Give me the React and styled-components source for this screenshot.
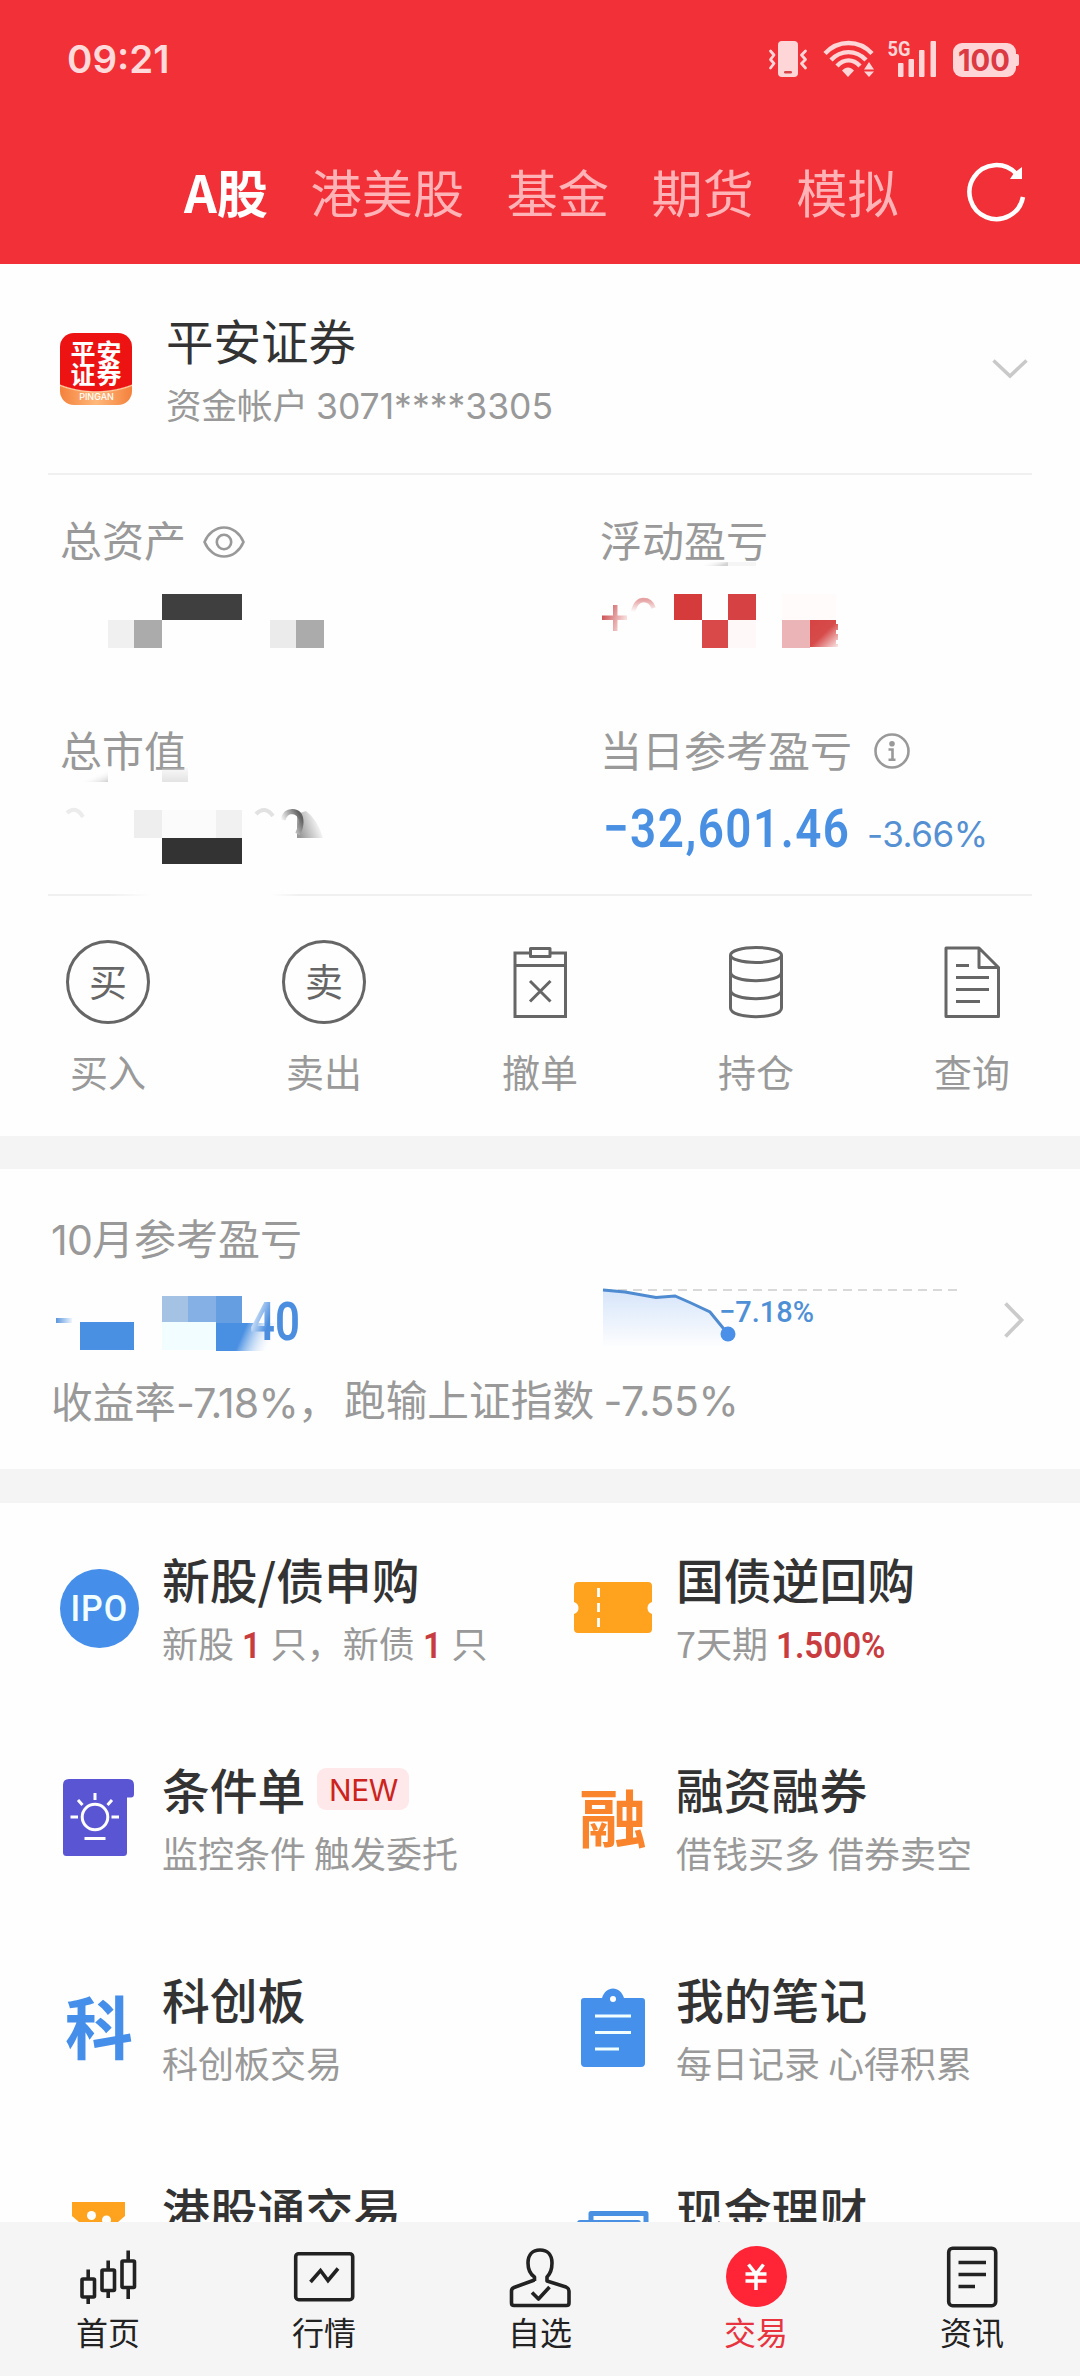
import React from 'react';
import styled, { createGlobalStyle } from 'styled-components';

const CJK = '"Noto Sans CJK SC", "Noto Sans", sans-serif';
const NUM = 'Inter, "Noto Sans CJK SC", sans-serif';
const DIN = 'Roboto, "Noto Sans CJK SC", sans-serif';

const Global = createGlobalStyle`
  *, *::before, *::after { box-sizing: border-box; }
  body { margin: 0; background: #fff; }
`;

const Page = styled.div`
  width: 1080px;
  height: 2376px;
  display: flex;
  flex-direction: column;
  overflow: hidden;
  background: #fefefe;
  color: #333;
  font-family: ${CJK};
  white-space: nowrap;
  svg { display: block; flex: none; overflow: visible; }
`;

const Num = styled.span`
  font-family: ${NUM};
  font-size: ${(p) => p.$size || 'inherit'};
  letter-spacing: ${(p) => p.$ls || 0}px;
`;

const Din = styled.span`
  display: inline-block;
  font-family: ${DIN};
  font-size: ${(p) => p.$size}px;
  font-weight: ${(p) => p.$weight || 600};
  letter-spacing: ${(p) => p.$ls || 0}px;
  transform: scaleX(${(p) => p.$sx || 0.9});
  transform-origin: ${(p) => p.$origin || 'left'} center;
`;

/* ---------- header ---------- */
const Header = styled.header`
  flex: none;
  height: 264px;
  background: #f13037;
  display: flex;
  flex-direction: column;
`;
const StatusBar = styled.div`
  height: 118px;
  padding: 0 60px 0 67px;
  display: flex;
  align-items: center;
  justify-content: space-between;
`;
const Clock = styled.div`
  color: #ffdadb;
  font: 600 38.5px/50px Inter, sans-serif;
  letter-spacing: 0;
`;
const Tabs = styled.nav`
  height: 146px;
  padding: 0 54px 0 184px;
  display: flex;
  align-items: center;
  gap: 42.5px;
`;
const Tab = styled.div`
  font-size: 51.2px;
  line-height: 60px;
  font-weight: ${(p) => (p.$active ? 700 : 400)};
  color: ${(p) => (p.$active ? '#fff' : '#ffb3b6')};
`;
const Refresh = styled.div`
  margin-left: auto;
`;

/* ---------- account ---------- */
const Section = styled.section`
  flex: none;
  background: #fefefe;
`;
const Band = styled.div`
  flex: none;
  height: ${(p) => p.$h}px;
  background: #f4f4f4;
`;
const Account = styled.div`
  height: 209px;
  padding: 0 52px 0 60px;
  display: flex;
  align-items: center;
`;
const Logo = styled.div`
  width: 72px;
  height: 72px;
  border-radius: 14px;
  overflow: hidden;
  background:
    radial-gradient(ellipse 80px 60px at 50% 0, #ed1313 0 96%, #fbd2a6 98%, transparent 100%),
    linear-gradient(90deg, #f4813c, #ffb87a 50%, #f4813c);
  color: #fff;
  font-size: 25px;
  font-weight: 700;
  line-height: 22px;
  text-align: center;
  padding: 7px 0 0 1px;
  letter-spacing: 1px;
`;
const LogoMark = styled.div`
  height: 44px;
`;
const LogoCaption = styled.div`
  padding-top: 7px;
  font: 500 9px/12px Inter, sans-serif;
  letter-spacing: 0;
`;
const AccountText = styled.div`
  margin-left: 34px;
  padding-top: 4px;
  flex: 1;
`;
const Name = styled.div`
  font-size: 47.5px;
  line-height: 60px;
`;
const AccountNo = styled.div`
  font-size: 35.5px;
  line-height: 50px;
  margin-top: 9px;
  color: #999;
`;
const Divider = styled.div`
  height: 2px;
  margin: 0 48px;
  background: ${(p) =>
    p.$gap
      ? 'linear-gradient(90deg, #f0f0f0 60px, #fefefe 104px, #fefefe 224px, #f0f0f0 250px)'
      : '#f0f0f0'};
`;
const Stats = styled.div`
  height: 419px;
  padding: 39px 0 0 60px;
  display: grid;
  grid-template-columns: 540px 1fr;
  grid-template-rows: 210px 170px;
`;
const Label = styled.div`
  display: flex;
  align-items: center;
  font-size: 42px;
  line-height: 50px;
  height: 50px;
  color: #999;
  gap: ${(p) => p.$gap || 0}px;
`;
const LabelIcon = styled.span`
  padding-top: ${(p) => p.$pt || 0}px;
`;
const Value = styled.div`
  display: flex;
  align-items: baseline;
  height: 84px;
  padding: 24px 0 0 3px;
  line-height: 60px;
  color: #4a90e2;
`;
const Amount = styled.div`
  width: 264px;
`;
const Percent = styled.div`
  font-family: ${NUM};
  font-size: 35px;
  letter-spacing: -0.5px;
  color: #5590d2;
`;

/* ---------- actions ---------- */
const Actions = styled.div`
  height: 240px;
  padding-top: 45px;
  display: grid;
  grid-template-columns: repeat(5, 1fr);
`;
const Action = styled.div`
  display: flex;
  flex-direction: column;
  align-items: center;
`;
const ActionIcon = styled.div`
  height: 82px;
  display: flex;
  align-items: center;
`;
const Ring = styled.div`
  width: 84px;
  height: 84px;
  border: 3px solid #666;
  border-radius: 50%;
  color: #666;
  font-size: 38px;
  line-height: 74px;
  text-align: center;
`;
const ActionLabel = styled.div`
  margin-top: 23px;
  font-size: 38px;
  line-height: 50px;
  color: #999;
`;

/* ---------- month ---------- */
const Month = styled(Section)`
  height: 300px;
  padding: 44px 57px 0 51px;
`;
const MonthRow = styled.div`
  height: 113px;
  display: flex;
  align-items: center;
`;
const MonthLine = styled.div`
  display: flex;
  height: 50px;
  margin-top: -3px;
  font-size: 41.7px;
  line-height: 50px;
  color: #999;
`;
const Yield = styled.div`
  width: 293px;
  padding-top: 2px;
`;

/* ---------- services ---------- */
const Services = styled(Section)`
  height: 719px;
  overflow: hidden;
  display: grid;
  grid-template-columns: 514px 1fr;
  grid-auto-rows: 210px;
`;
const Service = styled.div`
  display: flex;
  align-items: flex-start;
  padding-left: 57px;
`;
const ServiceIcon = styled.div`
  width: 84px;
  height: 84px;
  margin: 63px 21px 0 0;
  display: flex;
  align-items: center;
  justify-content: center;
`;
const GlyphIcon = styled.div`
  color: ${(p) => p.$color};
  font-size: 68px;
  font-weight: 700;
  line-height: 76px;
  padding-bottom: 7px;
  transform: scaleY(${(p) => p.$sy || 1});
`;
const IpoDisc = styled.div`
  width: 79px;
  height: 79px;
  border-radius: 50%;
  background: #458fea;
  color: #f2ffff;
  display: flex;
  align-items: center;
  justify-content: center;
  line-height: 79px;
`;
const ServiceText = styled.div`
  padding-top: 46px;
`;
const ServiceTitle = styled.div`
  display: flex;
  align-items: center;
  height: 60px;
  font-size: 47.8px;
  line-height: 60px;
  font-weight: 500;
  color: #333;
`;
const ServiceSub = styled.div`
  margin-top: 10px;
  height: 46px;
  font-size: 36px;
  line-height: 46px;
  color: #999;
`;
const Hot = styled(Din)`
  color: #c83c3f;
  line-height: 40px;
`;
const Badge = styled.span`
  margin: 0 0 0 12px;
  width: 92px;
  height: 42px;
  border-radius: 9px;
  background: #ffe8ea;
  color: #cc241d;
  font: 400 30px/44px Inter, sans-serif;
  text-align: center;
  letter-spacing: -0.5px;
`;

/* ---------- bottom bar ---------- */
const BottomBar = styled.nav`
  flex: none;
  height: 154px;
  background: #f5f5f5;
  padding-top: 24px;
  display: grid;
  grid-template-columns: repeat(5, 1fr);
`;
const BarItem = styled.div`
  display: flex;
  flex-direction: column;
  align-items: center;
  gap: 3px;
  color: ${(p) => (p.$active ? '#e8343f' : '#222')};
  font-size: 32px;
  line-height: 40px;
`;
const YenDisc = styled.div`
  width: 61px;
  height: 61px;
  margin-bottom: 1px;
  border-radius: 50%;
  background: #ff2436;
  display: flex;
  align-items: center;
  justify-content: center;
`;

/* ---------- drawings ---------- */
const StatusIcons = () => (
  <svg width="251" height="38" viewBox="770 40 251 38" fill="#ffd6d8">
    <rect x="779" y="41" width="20" height="36" rx="4" />
    <rect x="785" y="71" width="8" height="2.6" rx="1.3" fill="#d8434a" />
    <g fill="none" stroke="#ffd6d8" strokeWidth="2.8" strokeLinejoin="round" strokeLinecap="round">
      <path d="M771.500 51L775 55L771.500 59.500L775 63.500L771.500 68" />
      <path d="M806.500 51L802.500 55L806.500 59.500L802.500 63.500L806.500 68" />
    </g>
    <g fill="none" stroke="#ffd6d8" strokeWidth="4.400">
      <path d="M826 53.500C839 39.500 860 39.500 873 53.500" />
      <path d="M832 60C842 49.500 857 49.500 867 60" />
      <path d="M838 66C845 58.500 854 58.500 861 66" />
    </g>
    <path d="M843 70.500C847 66.500 851 66.500 855 70.500L849 77Z" />
    <path d="M865 69.500L870 62L875 69.500ZM865 71.500H875L870 77Z" />
    <rect x="899" y="63" width="5.500" height="14" rx="1" />
    <rect x="909.500" y="59" width="5.500" height="18" rx="1" />
    <rect x="920" y="50" width="5.500" height="27" rx="1" />
    <rect x="931.500" y="41" width="5.500" height="36" rx="1" />
    <text x="888.500" y="55.500" fontFamily="Roboto, sans-serif" fontWeight="700" fontSize="20.500" textLength="23" lengthAdjust="spacingAndGlyphs">5G</text>
    <rect x="954" y="43" width="63" height="34" rx="9" />
    <path d="M1016 54H1018Q1020 54 1020 56V64Q1020 66 1018 66H1016Z" />
    <text x="959" y="71" fontFamily="Inter, sans-serif" fontWeight="700" fontSize="29.500" fill="#dc3a42" textLength="52" lengthAdjust="spacingAndGlyphs">100</text>
  </svg>
);

const RefreshIcon = () => (
  <svg width="60" height="60" viewBox="965 162 60 60" fill="none" stroke="#fff" strokeWidth="4.500">
    <path d="M1015 174.500A27 27 0 1 0 1022 198" />
    <path d="M1021 168V180H1009L1013 174Z" fill="#fff" stroke="none" />
  </svg>
);

const ChevronDown = () => (
  <svg width="36" height="20" viewBox="0 0 36 20" fill="none" stroke="#c9c9c9" strokeWidth="3.500">
    <path d="M1.500 1.500L18 17L34.500 1.500" />
  </svg>
);

const ChevronRight = () => (
  <svg width="20" height="36" viewBox="0 0 20 36" fill="none" stroke="#cbcbcb" strokeWidth="3.800">
    <path d="M1.500 1.500L17.500 18L1.500 34.500" />
  </svg>
);

const Eye = () => (
  <svg width="42" height="32" viewBox="0 0 42 32" fill="none" stroke="#999" strokeWidth="2.600">
    <path d="M1.500 16C5 7.500 12.500 1.500 21 1.500S37 7.500 40.500 16C37 24.500 29.500 30.500 21 30.500S5 24.500 1.500 16Z" />
    <circle cx="21" cy="16" r="7.200" />
  </svg>
);

const Info = () => (
  <svg width="36" height="36" viewBox="0 0 36 36" fill="none" stroke="#999" strokeWidth="2.600">
    <circle cx="18" cy="18" r="16.500" />
    <circle cx="18" cy="10.800" r="2.800" fill="#999" stroke="none" />
    <path d="M14.500 16.500H18.500V26.500M14.500 26.700H21.500" />
  </svg>
);

const MaskedAssets = () => (
  <svg width="300" height="100" viewBox="60 564 300 100">
    <rect x="108" y="620" width="26" height="28" fill="#f0f0f0" />
    <rect x="134" y="620" width="28" height="28" fill="#ababab" />
    <rect x="162" y="594" width="80" height="26" fill="#3f3f3f" />
    <rect x="270" y="620" width="26" height="28" fill="#ebebeb" />
    <rect x="296" y="620" width="28" height="28" fill="#ababab" />
  </svg>
);

const MaskedMarket = () => (
  <svg width="300" height="100" viewBox="60 774 300 100">
    <defs>
      <linearGradient id="mk1" x1="0" y1="0" x2="1" y2="1">
        <stop offset="0.450" stopColor="#fefefe" stopOpacity="0" />
        <stop offset="1" stopColor="#cfcfcf" />
      </linearGradient>
      <linearGradient id="mk2" x1="0" y1="0" x2="0" y2="1">
        <stop offset="0" stopColor="#e3e3e3" stopOpacity="0.200" />
        <stop offset="1" stopColor="#e3e3e3" />
      </linearGradient>
      <linearGradient id="mk4" gradientUnits="userSpaceOnUse" x1="282" y1="822" x2="302" y2="812">
        <stop offset="0" stopColor="#fefefe" />
        <stop offset="0.850" stopColor="#626262" />
      </linearGradient>
      <linearGradient id="mk5" gradientUnits="userSpaceOnUse" x1="298" y1="830" x2="320" y2="822">
        <stop offset="0" stopColor="#9a9a9a" />
        <stop offset="1" stopColor="#fefefe" />
      </linearGradient>
    </defs>
    <rect x="80" y="770" width="28" height="12" fill="url(#mk1)" />
    <rect x="162" y="768" width="26" height="14" fill="url(#mk2)" />
    <rect x="134" y="810" width="28" height="28" fill="#eeeeee" />
    <rect x="162" y="810" width="54" height="28" fill="#fbfbfb" />
    <rect x="216" y="810" width="26" height="28" fill="#f1f1f1" />
    <rect x="162" y="838" width="80" height="26" fill="#333" />
    <path d="M67 813Q76 805 83 817" fill="none" stroke="#ececec" strokeWidth="4" />
    <path d="M256 814Q265 805 273 816" fill="none" stroke="#e2e2e2" strokeWidth="4" />
    <path d="M297 814L306 811Q318 820 323 838H297Z" fill="url(#mk5)" />
    <path d="M283 820Q285 811.500 292 811.500Q301 812 301 822Q301 828 297.500 834" fill="none" stroke="url(#mk4)" strokeWidth="5" />
  </svg>
);

const MaskedFloat = () => (
  <svg width="300" height="100" viewBox="600 564 300 100">
    <defs>
      <linearGradient id="fl1" x1="0" y1="0" x2="1" y2="0.400">
        <stop offset="0" stopColor="#c43b3e" />
        <stop offset="1" stopColor="#f8dcdc" />
      </linearGradient>
      <linearGradient id="fl2" x1="0" y1="0" x2="1" y2="1">
        <stop offset="0" stopColor="#d64343" />
        <stop offset="0.500" stopColor="#d64b4a" />
        <stop offset="1" stopColor="#fbeaea" />
      </linearGradient>
      <linearGradient id="fl3" x1="0" y1="0" x2="0" y2="1">
        <stop offset="0" stopColor="#e6a3a4" />
        <stop offset="1" stopColor="#fefefe" />
      </linearGradient>
      <linearGradient id="fl4" x1="0" y1="0" x2="1" y2="0.400">
        <stop offset="0.100" stopColor="#fefefe" stopOpacity="0" />
        <stop offset="1" stopColor="#d2d2d2" />
      </linearGradient>
    </defs>
    <rect x="704" y="562" width="24" height="4" fill="url(#fl4)" />
    <rect x="728" y="562" width="28" height="4" fill="#f5f5f5" />
    <path d="M602 615.500H613V605H617.500V615.500H627V620H617.500V631H613V620H602Z" fill="url(#fl1)" />
    <path d="M633 612Q636 600 643.500 600Q651 600 653.500 608" fill="none" stroke="url(#fl3)" strokeWidth="4.500" />
    <rect x="674" y="594" width="28" height="26" fill="#d63b3b" />
    <rect x="728" y="594" width="28" height="26" fill="#d64143" />
    <rect x="702" y="620" width="26" height="28" fill="#da494a" />
    <rect x="728" y="620" width="28" height="28" fill="#fef8f8" />
    <rect x="782" y="594" width="54" height="26" fill="#fefbfa" />
    <rect x="782" y="620" width="28" height="28" fill="#ebb5b7" />
    <path d="M810 620H836V624H838V630H836V634H838V640H836V644H838V647H810Z" fill="url(#fl2)" />
  </svg>
);

const MaskedMonth = () => (
  <svg width="552" height="113" viewBox="51 1263 552 113">
    <defs>
      <linearGradient id="mo1" x1="0" y1="0" x2="1" y2="0">
        <stop offset="0" stopColor="#5b96de" />
        <stop offset="1" stopColor="#eef5fd" />
      </linearGradient>
      <linearGradient id="mo2" x1="0" y1="0" x2="1" y2="0.200">
        <stop offset="0.500" stopColor="#4a90e2" />
        <stop offset="1" stopColor="#fefefe" stopOpacity="0.200" />
      </linearGradient>
      <linearGradient id="mo3" gradientUnits="userSpaceOnUse" x1="252" y1="1312" x2="270" y2="1318">
        <stop offset="0" stopColor="#eaf2fc" />
        <stop offset="1" stopColor="#4b8edf" />
      </linearGradient>
    </defs>
    <rect x="56" y="1318" width="16" height="5" fill="url(#mo1)" />
    <rect x="80" y="1322" width="54" height="28" fill="#4a90e2" />
    <rect x="162" y="1296" width="26" height="26" fill="#a4c3e4" />
    <rect x="188" y="1296" width="28" height="26" fill="#84b0e5" />
    <rect x="216" y="1296" width="26" height="27" fill="#669fe1" />
    <rect x="162" y="1322" width="54" height="28" fill="#f2fdff" />
    <rect x="216" y="1323" width="60" height="28" fill="url(#mo2)" />
    <text x="250" y="1340" fontFamily="Roboto, sans-serif" fontWeight="600" fontSize="53" fill="url(#mo3)" textLength="50" lengthAdjust="spacingAndGlyphs">40</text>
  </svg>
);

const line = 'M603 1290L625 1292L656 1297.500L675 1296L691 1303L710 1312L728 1334';
const Sparkline = () => (
  <svg width="401" height="113" viewBox="603 1263 401 113">
    <defs>
      <linearGradient id="sp" x1="0" y1="0" x2="0" y2="1">
        <stop offset="0" stopColor="#d6e5fa" />
        <stop offset="1" stopColor="#fefefe" />
      </linearGradient>
    </defs>
    <path d={`${line}V1348H603Z`} fill="url(#sp)" />
    <path d="M603 1290H957" stroke="#d9d9d9" strokeWidth="2" strokeDasharray="9 6" />
    <path d={line} fill="none" stroke="#4f8bd0" strokeWidth="3" />
    <circle cx="728" cy="1334" r="7.500" fill="#4a90e8" />
    <text x="719" y="1322" fontFamily="Roboto, sans-serif" fontWeight="500" fontSize="30" fill="#4f8fd6" textLength="95" lengthAdjust="spacingAndGlyphs">−7.18%</text>
  </svg>
);

const CancelIcon = () => (
  <svg width="56" height="72" viewBox="512 946 56 72" fill="none" stroke="#666" strokeWidth="3">
    <path d="M529.500 953H515V1016.500H565.500V953H551" />
    <path d="M530.500 948.500H550V956.500H530.500Z" strokeLinejoin="round" />
    <path d="M515 965.500H565.500M530 981L550.500 1001.500M550.500 981L530 1001.500" />
  </svg>
);
const HoldIcon = () => (
  <svg width="56" height="72" viewBox="728 946 56 72" fill="none" stroke="#666" strokeWidth="3">
    <ellipse cx="756" cy="955" rx="25.500" ry="7.500" />
    <path d="M730.500 955V1008C730.500 1019.500 781.500 1019.500 781.500 1008V955" />
    <path d="M730.500 972C730.500 983.500 781.500 983.500 781.500 972M730.500 990C730.500 1001.500 781.500 1001.500 781.500 990" />
  </svg>
);
const QueryIcon = () => (
  <svg width="56" height="72" viewBox="944 946 56 72" fill="none" stroke="#666" strokeWidth="3" strokeLinejoin="round">
    <path d="M979 948H946V1016.500H998.500V967.500L979 948V967.500H998.500" />
    <path d="M956 965.500H969M956 977.500H989M956 989.500H989M956 1001.500H980" />
  </svg>
);

const BulbIcon = () => (
  <svg width="72" height="78" viewBox="63 1779 72 78">
    <path d="M69 1779H128Q134 1779 134 1785V1794Q134 1797.500 131 1797.500H127V1852.500Q127 1856 123.500 1856H66.500Q63 1856 63 1852.500V1785Q63 1779 69 1779Z" fill="#5a55d2" />
    <g fill="none" stroke="#fff" strokeWidth="3">
      <circle cx="95" cy="1817" r="12.800" />
      <path d="M95 1793V1800M78 1800L82.500 1805M112 1800L107.500 1805M70.500 1817H78M111.500 1817H119M84.500 1838.500H105.500" />
    </g>
  </svg>
);
const TicketIcon = () => (
  <svg width="80" height="52" viewBox="573 1583 80 52">
    <path d="M578 1583H648Q652 1583 652 1587V1603Q647.500 1604.500 647.500 1609T652 1615V1630Q652 1634 648 1634H578Q574 1634 574 1630V1615Q578.500 1613.500 578.500 1609T574 1603V1587Q574 1583 578 1583Z" fill="#ffa31f" />
    <path d="M598.500 1589V1598M598.500 1604V1613M598.500 1619V1628" stroke="#fff" strokeWidth="2.800" />
  </svg>
);
const NoteIcon = () => (
  <svg width="64" height="80" viewBox="581 1988 64 80">
    <path d="M584 1998H602C604 1992 608 1988.500 613 1988.500S622 1992 624 1998H642Q645 1998 645 2001V2063Q645 2067 641 2067H585Q581 2067 581 2063V2001Q581 1998 584 1998Z" fill="#4590ea" />
    <circle cx="613" cy="1999" r="3" fill="#fff" />
    <path d="M595 2016H631M595 2032.500H631M595 2049H619" stroke="#f2ffff" strokeWidth="3.200" />
  </svg>
);
const HkIcon = () => (
  <svg width="54" height="80" viewBox="72 2198 54 80">
    <path d="M72 2202H125V2216L118 2222V2270H79V2222L72 2216Z" fill="#ffa31f" />
    <circle cx="91.500" cy="2215.500" r="4.500" fill="#fff" />
    <circle cx="106.500" cy="2220" r="4.500" fill="#fff" />
  </svg>
);
const CashIcon = () => (
  <svg width="72" height="76" viewBox="578 2201 72 76" fill="none">
    <path d="M592 2222V2214.500H647V2262" stroke="#4a90e2" strokeWidth="5" strokeLinejoin="round" />
    <rect x="578" y="2221" width="64" height="46" rx="3" fill="#4a90e2" />
  </svg>
);

const HomeIcon = () => (
  <svg width="62" height="62" viewBox="77 2246 62 62" fill="none" stroke="#222" strokeWidth="3.600">
    <rect x="82" y="2279" width="12.500" height="18" rx="1" />
    <rect x="102" y="2270" width="12.500" height="20.500" rx="1" />
    <rect x="122" y="2261" width="12.500" height="26.500" rx="1" />
    <path d="M88.200 2269.500V2279M88.200 2297V2304M108.200 2260.500V2270M108.200 2290.500V2298M128.200 2250.500V2261M128.200 2287.500V2299" />
  </svg>
);
const MarketIcon = () => (
  <svg width="62" height="62" viewBox="293 2246 62 62" fill="none" stroke="#222" strokeWidth="3.600">
    <rect x="295.700" y="2253.700" width="57" height="46" rx="3" />
    <path d="M310.500 2282L320.500 2270.500L328 2280.500L338 2268.500" />
  </svg>
);
const PersonIcon = () => (
  <svg width="62" height="62" viewBox="509 2246 62 62" fill="none" stroke="#222" strokeWidth="3.600" strokeLinejoin="round">
    <path d="M534.500 2281V2277C530 2274 528 2269 528 2263C528 2255 532.500 2250 540 2250S552 2255 552 2263C552 2269 550 2274 547 2277V2281L566 2287Q569 2288.500 569 2291V2303Q569 2305.500 566.500 2305.500H514Q511.500 2305.500 511.500 2303V2291Q511.500 2288.500 514 2287.500L534.500 2280" />
    <path d="M532 2292.500L538.500 2299L549.500 2287" />
  </svg>
);
const NewsIcon = () => (
  <svg width="62" height="62" viewBox="941 2246 62 62" fill="none" stroke="#222" strokeWidth="3.600">
    <rect x="948.700" y="2248.200" width="47" height="57.500" rx="4" />
    <path d="M958.500 2262.500H986M958.500 2274.500H986M958.500 2286.500H975" />
  </svg>
);
const YenMark = () => (
  <svg width="24" height="28" viewBox="0 0 24 28" fill="none" stroke="#fff" strokeWidth="3.500">
    <path d="M4.500 1.500L12 11L19.500 1.500M12 10V27M1.500 11H22.500M1.500 18H22.500" />
  </svg>
);

const actions = [
  ['买入', <Ring key="b">买</Ring>],
  ['卖出', <Ring key="s">卖</Ring>],
  ['撤单', <CancelIcon key="c" />],
  ['持仓', <HoldIcon key="h" />],
  ['查询', <QueryIcon key="q" />],
];

const services = [
  {
    icon: <IpoDisc><Din $size={37} $weight={500} $sx={0.92} $ls={1} $origin="center">IPO</Din></IpoDisc>,
    title: '新股/债申购',
    sub: <>新股 <Hot $size={36} $sx={0.92}>1</Hot> 只，新债 <Hot $size={36} $sx={0.92}>1</Hot> 只</>,
  },
  { icon: <TicketIcon />, title: '国债逆回购', sub: <>7天期 <Hot $size={36} $sx={0.92}>1.500%</Hot></> },
  { icon: <BulbIcon />, title: '条件单', badge: 'NEW', sub: '监控条件 触发委托' },
  { icon: <GlyphIcon $color="#f9842b" $sy={0.92}>融</GlyphIcon>, title: '融资融券', sub: '借钱买多 借券卖空' },
  { icon: <GlyphIcon $color="#458fea">科</GlyphIcon>, title: '科创板', sub: '科创板交易' },
  { icon: <NoteIcon />, title: '我的笔记', sub: '每日记录 心得积累' },
  { icon: <HkIcon />, title: '港股通交易', sub: '' },
  { icon: <CashIcon />, title: '现金理财', sub: '' },
];

const tabs = ['A股', '港美股', '基金', '期货', '模拟'];

const bar = [
  ['首页', <HomeIcon key="h" />],
  ['行情', <MarketIcon key="m" />],
  ['自选', <PersonIcon key="p" />],
  ['交易', <YenDisc key="y"><YenMark /></YenDisc>],
  ['资讯', <NewsIcon key="n" />],
];

export default function App() {
  return (
    <Page>
      <Global />
      <Header>
        <StatusBar>
          <Clock>09:21</Clock>
          <StatusIcons />
        </StatusBar>
        <Tabs>
          {tabs.map((t, i) => (
            <Tab key={t} $active={i === 0}>{t}</Tab>
          ))}
          <Refresh><RefreshIcon /></Refresh>
        </Tabs>
      </Header>

      <Section>
        <Account>
          <Logo>
            <LogoMark>平安<br />证券</LogoMark>
            <LogoCaption>PINGAN</LogoCaption>
          </Logo>
          <AccountText>
            <Name>平安证券</Name>
            <AccountNo>资金帐户 <Num>3071****3305</Num></AccountNo>
          </AccountText>
          <ChevronDown />
        </Account>
        <Divider />
        <Stats>
          <div>
            <Label $gap={17}>总资产<LabelIcon $pt={6}><Eye /></LabelIcon></Label>
            <MaskedAssets />
          </div>
          <div>
            <Label>浮动盈亏</Label>
            <MaskedFloat />
          </div>
          <div>
            <Label>总市值</Label>
            <MaskedMarket />
          </div>
          <div>
            <Label $gap={22}>当日参考盈亏<LabelIcon $pt={4}><Info /></LabelIcon></Label>
            <Value>
              <Amount><Din $size={54.5} $sx={0.84} $ls={1.8}>−32,601.46</Din></Amount>
              <Percent>-3.66%</Percent>
            </Value>
          </div>
        </Stats>
        <Divider $gap />
        <Actions>
          {actions.map(([label, icon]) => (
            <Action key={label}>
              <ActionIcon>{icon}</ActionIcon>
              <ActionLabel>{label}</ActionLabel>
            </Action>
          ))}
        </Actions>
      </Section>

      <Band $h={33} />

      <Month>
        <Label><span><Num $size="41px" $ls={-0.8}>10</Num>月参考盈亏</span></Label>
        <MonthRow>
          <MaskedMonth />
          <Sparkline />
          <ChevronRight />
        </MonthRow>
        <MonthLine>
          <Yield>收益率<Num $size="41px" $ls={-0.8}>-7.18%</Num>，</Yield>
          <div>跑输上证指数 <Num $size="41px" $ls={-0.4}>-7.55%</Num></div>
        </MonthLine>
      </Month>

      <Band $h={34} />

      <Services>
        {services.map((s) => (
          <Service key={s.title}>
            <ServiceIcon>{s.icon}</ServiceIcon>
            <ServiceText>
              <ServiceTitle>
                {s.title}
                {s.badge && <Badge>{s.badge}</Badge>}
              </ServiceTitle>
              <ServiceSub>{s.sub}</ServiceSub>
            </ServiceText>
          </Service>
        ))}
      </Services>

      <BottomBar>
        {bar.map(([label, icon]) => (
          <BarItem key={label} $active={label === '交易'}>
            {icon}
            <span>{label}</span>
          </BarItem>
        ))}
      </BottomBar>
    </Page>
  );
}
